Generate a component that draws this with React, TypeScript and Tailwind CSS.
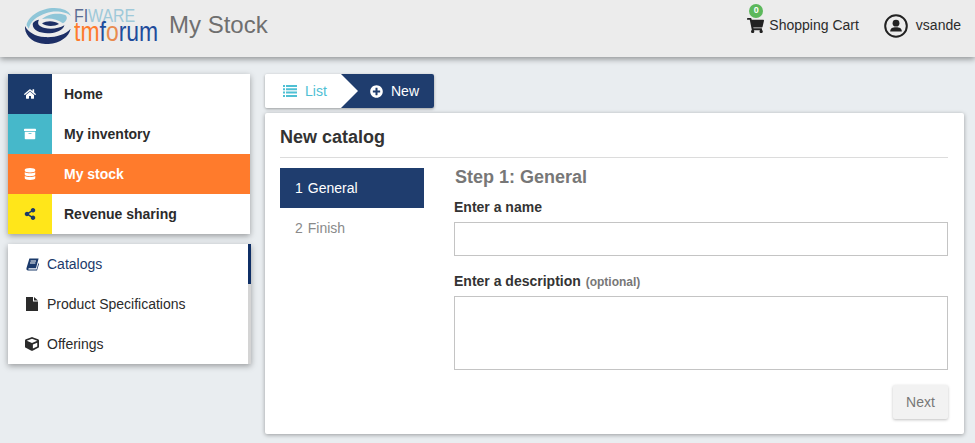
import { FaArchive, FaCube, FaDatabase, FaHome, FaPlusCircle, FaShareAlt, FaShoppingCart } from 'react-icons/fa';
import type { ReactNode } from 'react';

const mainMenu = [
  { label: 'Home', icon: <FaHome />, box: 'bg-[#1b3a6b] text-white', row: 'bg-white text-[#2b2b2b]' },
  { label: 'My inventory', icon: <FaArchive />, box: 'bg-[#46b8ca] text-white', row: 'bg-white text-[#2b2b2b]' },
  { label: 'My stock', icon: <FaDatabase />, box: 'bg-[#ff7b2c] text-white', row: 'bg-[#ff7b2c] text-white' },
  { label: 'Revenue sharing', icon: <FaShareAlt />, box: 'bg-[#ffe61a] text-[#1b3a6b]', row: 'bg-white text-[#2b2b2b]' },
];

function BookIcon() {
  return (
    <svg viewBox="0 0 13 13" className="w-[13px] h-[13px]">
      <path d="M3.4 0.5 H12.6 L10 10.2 H3 C2.2 10.2 2 11.6 3 11.6 H10.6 L12.4 5 L13 6 L11 12.6 H2.2 C0.6 12.6 0.2 11.2 0.5 10 Z" fill="currentColor" />
      <path d="M4.6 3 H10 M4 5 H9.4" stroke="#fff" strokeWidth="1" />
    </svg>
  );
}

function FileIcon() {
  return (
    <svg viewBox="0 0 12 14" className="w-[12px] h-[14px]">
      <path d="M0 0 H7 V4.5 H12 V14 H0 Z M8 0 L12 3.6 H8 Z" fill="currentColor" />
    </svg>
  );
}

function ListIcon() {
  return (
    <svg viewBox="0 0 14 12" className="w-[14px] h-[12px]" fill="currentColor">
      <path d="M0 0 H2 V2 H0 Z M3 0 H14 V2 H3 Z M0 3.3 H2 V5.3 H0 Z M3 3.3 H14 V5.3 H3 Z M0 6.6 H2 V8.6 H0 Z M3 6.6 H14 V8.6 H3 Z M0 10 H2 V12 H0 Z M3 10 H14 V12 H3 Z" />
    </svg>
  );
}

const subMenu: { label: string; icon: ReactNode; color: string }[] = [
  { label: 'Catalogs', icon: <BookIcon />, color: 'text-[#1b3a6b]' },
  { label: 'Product Specifications', icon: <FileIcon />, color: 'text-[#2b2b2b]' },
  { label: 'Offerings', icon: <FaCube className="text-[14px] -ml-[1px]" />, color: 'text-[#2b2b2b]' },
];

function Logo() {
  return (
    <div className="relative w-[135px] h-[44px] shrink-0">
      <svg viewBox="24 12 119 104" preserveAspectRatio="none" className="absolute left-0 top-[1px] w-[46px] h-[36px]">
        <path d="M28 62 C32 35 65 12 100 12 C122 12 138 20 143 35 C130 22 100 18 78 27 C55 36 38 50 34 72 Z" fill="#8fc6d8" />
        <path d="M24 64 C22 95 50 118 85 116 C115 114 138 95 142 72 C128 90 100 98 75 96 C50 94 32 82 24 64 Z" fill="#1d2f66" />
        <path d="M44 60 C44 80 70 88 95 84 C112 81 124 72 126 62 C112 72 90 74 75 70 C62 66 54 60 60 46 C50 48 44 54 44 60 Z" fill="#1d2f66" />
        <path d="M68 44 C80 30 108 24 128 32 C136 38 132 50 122 56 C108 44 88 40 68 44 Z" fill="#8fc6d8" />
        <path d="M68 56 C80 48 100 48 112 58 C100 66 78 66 68 56 Z" fill="#1d2f66" />
      </svg>
      <span className="absolute left-[49px] top-[1px] h-[13.5px] text-[16px] leading-[13.5px] tracking-[-0.1px] origin-top-left scale-y-[1.15] text-[#5b6c93]">
        FI<span className="font-light text-[#9fc9d9]">WARE</span>
      </span>
      <span className="absolute left-[49px] top-[17px] h-[16px] text-[27px] leading-[16px] origin-left scale-x-[0.85] text-[#ff7b2c]">
        tm<span className="text-[#1f4c9c]">f</span><span className="text-[#e88a4e]">o</span><span className="text-[#1f4c9c]">rum</span>
      </span>
    </div>
  );
}

function UserIcon() {
  return (
    <svg viewBox="0 0 24 24" className="w-[24px] h-[24px]">
      <circle cx="12" cy="12" r="10.8" fill="none" stroke="#222" strokeWidth="2" />
      <circle cx="12" cy="9.2" r="3.4" fill="#222" />
      <path d="M6.2 17.6 C6.2 14 8.5 13.2 12 13.2 C15.5 13.2 17.8 14 17.8 17.6 Z" fill="#222" />
    </svg>
  );
}

export default function App() {
  return (
    <div className="w-[975px] h-[443px] overflow-hidden bg-[#e9edf0] font-['Liberation_Sans',sans-serif] text-[14px] text-[#2b2b2b]">
      <header className="relative z-10 h-[57px] bg-[#ececec] shadow-[0_2px_6px_rgba(0,0,0,0.4)] flex items-center pl-[25px] pr-[14px]">
        <Logo />
        <h1 className="ml-[9px] text-[24px] text-[#6f6f6f] relative top-[-4px]">My Stock</h1>
        <div className="ml-auto flex items-center relative top-[-3px]">
          <div className="relative flex items-center gap-[5px]">
            <FaShoppingCart className="text-[17px] text-[#222]" />
            <span className="absolute left-[2px] top-[-11px] w-[14px] h-[14px] rounded-full bg-[#5cb85c] text-white text-[9px] font-bold flex items-center justify-center">0</span>
            <span>Shopping Cart</span>
          </div>
          <div className="ml-[25px] flex items-center gap-[8px]">
            <UserIcon />
            <span>vsande</span>
          </div>
        </div>
      </header>

      <div className="flex pt-[17px] pl-[8px]">
        <aside className="w-[243px] shrink-0">
          <nav className="w-[242px] shadow-[0_2px_6px_rgba(0,0,0,0.35)]">
            {mainMenu.map((item) => (
              <div key={item.label} className={`flex h-[40px] items-center font-bold ${item.row}`}>
                <div className={`w-[44px] h-full flex items-center justify-center pr-[1px] text-[12px] ${item.box}`}>{item.icon}</div>
                <span className="ml-[12px]">{item.label}</span>
              </div>
            ))}
          </nav>
          <nav className="relative mt-[10px] w-[243px] bg-white shadow-[0_2px_6px_rgba(0,0,0,0.35)]">
            {subMenu.map((item) => (
              <div key={item.label} className="flex h-[40px] items-center pl-[18px]">
                <span className={`w-[21px] ${item.color}`}>{item.icon}</span>
                <span className={item.color}>{item.label}</span>
              </div>
            ))}
            <div className="absolute right-0 top-0 w-[3px] h-full bg-[#d4d4d4]">
              <div className="w-full h-[40px] bg-[#0f2f66]" />
            </div>
          </nav>
        </aside>

        <main className="ml-[14px] w-[699px]">
          <div className="flex h-[34px] w-fit rounded-[2px] overflow-hidden shadow-[0_1px_3px_rgba(0,0,0,0.35)]">
            <div className="relative flex items-center w-[76px] pl-[18px] gap-[8px] bg-white text-[#4fc0d4]">
              <ListIcon />
              <span>List</span>
            </div>
            <div className="flex items-center w-[93px] bg-[#1f3d6e] text-white">
              <svg viewBox="0 0 17 34" className="w-[17px] h-[34px] shrink-0">
                <path d="M0 0 L17 17 L0 34 Z" fill="#fff" />
              </svg>
              <FaPlusCircle className="ml-[12px] text-[13px]" />
              <span className="ml-[8px]">New</span>
            </div>
          </div>

          <section className="mt-[5px] h-[321px] bg-white rounded-[2px] shadow-[0_1px_4px_rgba(0,0,0,0.35)] pl-[15px] pr-[16px] pt-[13px]">
            <h2 className="h-[31px] text-[18px] leading-[22px] font-bold text-[#333] border-b border-[#dcdcdc] box-content pb-0">New catalog</h2>
            <div className="flex mt-[10px]">
              <div className="w-[144px] shrink-0">
                <div className="h-[40px] flex items-center pl-[15px] bg-[#1f3d6e] text-white">
                  <span>1</span>
                  <span className="ml-[5px]">General</span>
                </div>
                <div className="h-[40px] flex items-center pl-[15px] text-[#8a8a8a]">
                  <span>2</span>
                  <span className="ml-[5px]">Finish</span>
                </div>
              </div>
              <form className="ml-[30px] w-[494px]">
                <h3 className="ml-[1px] text-[18px] leading-[18px] font-bold text-[#777]">Step 1: General</h3>
                <label className="block mt-[13px] leading-[16px] font-bold text-[#333]">Enter a name</label>
                <input className="block mt-[7px] w-full h-[34px] border border-[#c4c4c4] bg-white" />
                <label className="block mt-[17px] leading-[16px] font-bold text-[#333]">
                  Enter a description <span className="ml-[1px] text-[12px] text-[#777]">(optional)</span>
                </label>
                <textarea className="block mt-[6px] w-full h-[74px] border border-[#c4c4c4] bg-white resize-none" />
                <div className="flex justify-end mt-[15px]">
                  <button type="button" className="w-[55px] h-[34px] rounded-[2px] bg-[#f2f2f2] text-[#777] shadow-[0_1px_3px_rgba(0,0,0,0.25)]">Next</button>
                </div>
              </form>
            </div>
          </section>
        </main>
      </div>
    </div>
  );
}
